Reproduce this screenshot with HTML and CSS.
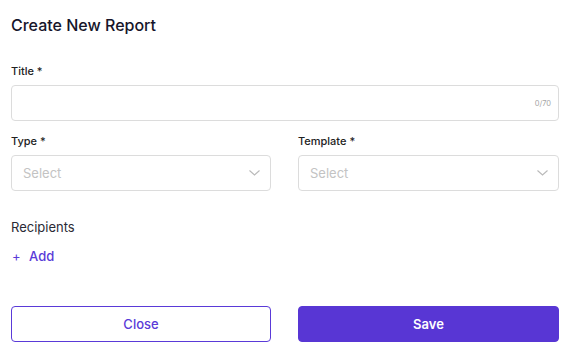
FILE: index.html
```html
<!DOCTYPE html>
<html lang="en">
<head>
    <meta charset="UTF-8">
    <meta name="viewport" content="width=device-width, initial-scale=1.0">
    <title>Create New Report</title>
    <link rel="stylesheet" href="styles.css">
</head>
<body>
    <div class="report-form">
        <h1>Create New Report</h1>

        <div class="field field-title">
            <label for="title">Title *</label>
            <div class="text-box">
                <input type="text" id="title" maxlength="70">
                <span class="counter">0/70</span>
            </div>
        </div>

        <div class="field-row">
            <div class="field">
                <label>Type *</label>
                <div class="select-box">
                    <span class="placeholder">Select</span>
                    <svg width="11" height="6" viewBox="0 0 11 6"><polyline points="0.5,0.5 5.5,5 10.5,0.5" fill="none" stroke="#b9b9b9" stroke-width="1.1"/></svg>
                </div>
            </div>
            <div class="field">
                <label>Template *</label>
                <div class="select-box">
                    <span class="placeholder">Select</span>
                    <svg width="11" height="6" viewBox="0 0 11 6"><polyline points="0.5,0.5 5.5,5 10.5,0.5" fill="none" stroke="#b9b9b9" stroke-width="1.1"/></svg>
                </div>
            </div>
        </div>

        <div class="recipients">
            <div class="recipients-label">Recipients</div>
            <a href="#" class="add-link"><span class="plus">+</span> Add</a>
        </div>

        <div class="actions">
            <button class="btn btn-outline">Close</button>
            <button class="btn btn-primary">Save</button>
        </div>
    </div>
</body>
</html>
```

FILE: styles.css
```css
body {
    font-family: Inter, "Liberation Sans", sans-serif;
    margin: 0;
    padding: 0;
    background-color: #fff;
    color: #1c1b2e;
}

.report-form {
    width: 548px;
    margin-left: 11px;
    padding-top: 14px;
}

h1 {
    font-size: 16px;
    line-height: 22px;
    font-weight: 500;
    margin: 0 0 27px 0;
    color: #16152a;
}

.field label {
    display: block;
    font-size: 11px;
    line-height: 16px;
    font-weight: 500;
    margin-bottom: 6px;
    color: #222;
}

.field-title {
    margin-bottom: 12px;
}

.text-box {
    display: flex;
    align-items: center;
    height: 36px;
    border: 1px solid #dcdcdc;
    border-radius: 4px;
    box-sizing: border-box;
    padding: 0 7px 0 11px;
}

.text-box input {
    flex: 1;
    border: none;
    outline: none;
    font-family: inherit;
    font-size: 13px;
    padding: 0;
}

.counter {
    font-size: 7.5px;
    color: #a5a5a5;
    margin-top: 1px;
}

.field-row {
    display: grid;
    grid-template-columns: 260px 261px;
    column-gap: 27px;
}

.select-box {
    display: flex;
    align-items: center;
    justify-content: space-between;
    height: 36px;
    border: 1px solid #dcdcdc;
    border-radius: 4px;
    box-sizing: border-box;
    padding: 0 10px 0 11px;
}

.select-box .placeholder {
    font-size: 13px;
    color: #c3c3c3;
}

.recipients {
    margin-top: 27px;
}

.recipients-label {
    font-size: 13px;
    line-height: 18px;
    color: #2a2a35;
}

.add-link {
    display: inline-block;
    margin-top: 11px;
    font-size: 13px;
    line-height: 18px;
    font-weight: 500;
    color: #5a3ad8;
    text-decoration: none;
}

.add-link .plus {
    display: inline-block;
    margin-left: 1px;
    margin-right: 5px;
    font-weight: 400;
}

.actions {
    display: grid;
    grid-template-columns: 260px 261px;
    column-gap: 27px;
    margin-top: 41px;
}

.btn {
    height: 36px;
    border-radius: 4px;
    font-family: inherit;
    font-size: 13px;
    cursor: pointer;
}

.btn-outline {
    background-color: #fff;
    border: 1px solid #5a3ad8;
    color: #5a3ad8;
    font-weight: 500;
}

.btn-primary {
    background-color: #5836d4;
    border: 1px solid #5836d4;
    color: #fff;
    font-weight: 600;
}
```
